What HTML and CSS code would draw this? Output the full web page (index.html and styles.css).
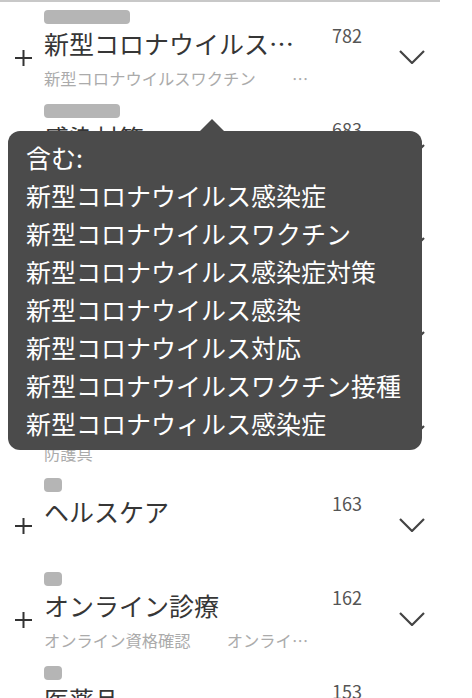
FILE: index.html
```html
<!DOCTYPE html>
<html lang="ja">
<head>
<meta charset="utf-8">
<link rel="stylesheet" href="styles.css">
</head>
<body>
<div class="list">
  <div class="row">
    <svg class="plus" viewBox="0 0 17 16"><path d="M8.5 0V16M0 8H17"/></svg>
    <div class="main">
      <div class="tag" style="width:86px"></div>
      <div class="title">新型コロナウイルス感染症</div>
      <div class="sub">新型コロナウイルスワクチン　　 新型コロナウイルス感染症対策</div>
    </div>
    <div class="count">782</div>
    <svg class="chev" viewBox="0 0 26 14"><path d="M1 1L13 13L25 1"/></svg>
  </div>
  <div class="row">
    <svg class="plus" viewBox="0 0 17 16"><path d="M8.5 0V16M0 8H17"/></svg>
    <div class="main">
      <div class="tag" style="width:76px"></div>
      <div class="title">感染対策</div>
      <div class="sub">消毒　　 換気</div>
    </div>
    <div class="count">683</div>
    <svg class="chev" viewBox="0 0 26 14"><path d="M1 1L13 13L25 1"/></svg>
  </div>
  <div class="row">
    <svg class="plus" viewBox="0 0 17 16"><path d="M8.5 0V16M0 8H17"/></svg>
    <div class="main">
      <div class="tag" style="width:60px"></div>
      <div class="title">マスク</div>
      <div class="sub">不織布マスク</div>
    </div>
    <div class="count">412</div>
    <svg class="chev" viewBox="0 0 26 14"><path d="M1 1L13 13L25 1"/></svg>
  </div>
  <div class="row">
    <svg class="plus" viewBox="0 0 17 16"><path d="M8.5 0V16M0 8H17"/></svg>
    <div class="main">
      <div class="tag" style="width:40px"></div>
      <div class="title">医療機関</div>
      <div class="sub">病院</div>
    </div>
    <div class="count">305</div>
    <svg class="chev" viewBox="0 0 26 14"><path d="M1 1L13 13L25 1"/></svg>
  </div>
  <div class="row">
    <svg class="plus" viewBox="0 0 17 16"><path d="M8.5 0V16M0 8H17"/></svg>
    <div class="main">
      <div class="tag" style="width:40px"></div>
      <div class="title">医療用品</div>
      <div class="sub">防護具</div>
    </div>
    <div class="count">201</div>
    <svg class="chev" viewBox="0 0 26 14"><path d="M1 1L13 13L25 1"/></svg>
  </div>
  <div class="row">
    <svg class="plus" viewBox="0 0 17 16"><path d="M8.5 0V16M0 8H17"/></svg>
    <div class="main">
      <div class="tag" style="width:18px"></div>
      <div class="title">ヘルスケア</div>
      <div class="sub"></div>
    </div>
    <div class="count">163</div>
    <svg class="chev" viewBox="0 0 26 14"><path d="M1 1L13 13L25 1"/></svg>
  </div>
  <div class="row">
    <svg class="plus" viewBox="0 0 17 16"><path d="M8.5 0V16M0 8H17"/></svg>
    <div class="main">
      <div class="tag" style="width:18px"></div>
      <div class="title">オンライン診療</div>
      <div class="sub">オンライン資格確認　　 オンライン服薬指導</div>
    </div>
    <div class="count">162</div>
    <svg class="chev" viewBox="0 0 26 14"><path d="M1 1L13 13L25 1"/></svg>
  </div>
  <div class="row">
    <svg class="plus" viewBox="0 0 17 16"><path d="M8.5 0V16M0 8H17"/></svg>
    <div class="main">
      <div class="tag" style="width:18px"></div>
      <div class="title">医薬品</div>
      <div class="sub">治療薬</div>
    </div>
    <div class="count">153</div>
    <svg class="chev" viewBox="0 0 26 14"><path d="M1 1L13 13L25 1"/></svg>
  </div>

  <div class="tooltip">
    <div class="tip-line">含む:</div>
    <div class="tip-line">新型コロナウイルス感染症</div>
    <div class="tip-line">新型コロナウイルスワクチン</div>
    <div class="tip-line">新型コロナウイルス感染症対策</div>
    <div class="tip-line">新型コロナウイルス感染</div>
    <div class="tip-line">新型コロナウイルス対応</div>
    <div class="tip-line">新型コロナウイルスワクチン接種</div>
    <div class="tip-line">新型コロナウィルス感染症</div>
  </div>
</div>
</body>
</html>
```

FILE: styles.css
```css
html, body {
  margin: 0;
  padding: 0;
  background: #ffffff;
  overflow: hidden;
}

body {
  font-family: "Noto Sans CJK JP", "Noto Sans", sans-serif;
  color: #333333;
}

.list {
  position: relative;
  width: 440px;
  border-top: 2px solid #c8c8c8;
}

.row {
  display: grid;
  grid-template-columns: 44px 288px 67px 25px;
  align-items: start;
  height: 93.7px;
  box-sizing: border-box;
  padding-top: 8px;
  overflow: hidden;
}

.plus {
  width: 17px;
  height: 16px;
  margin-top: 40px;
  margin-left: 15px;
  fill: none;
  stroke: #333333;
  stroke-width: 2;
}

.main {
  min-width: 0;
}

.tag {
  height: 14px;
  border-radius: 4px;
  background: #b5b5b5;
}

.title {
  width: 262px;
  margin-top: 3px;
  font-size: 25px;
  line-height: 32px;
  color: #363636;
  white-space: nowrap;
  overflow: hidden;
  text-overflow: ellipsis;
}

.sub {
  width: 272px;
  height: 22px;
  margin-top: 8px;
  font-size: 16.3px;
  line-height: 22px;
  color: #ababab;
  white-space: pre;
  overflow: hidden;
  text-overflow: ellipsis;
}

.count {
  margin-top: 15px;
  font-size: 18px;
  line-height: 20px;
  color: #555555;
}

.chev {
  width: 26px;
  height: 14px;
  margin-top: 40px;
  fill: none;
  stroke: #444444;
  stroke-width: 2.2;
}

.tooltip {
  position: absolute;
  left: 8px;
  top: 129px;
  width: 414px;
  height: 319px;
  box-sizing: border-box;
  padding: 7px 0 0 18px;
  border-radius: 12px;
  background: #4b4b4b;
  color: #ffffff;
  font-size: 25px;
  line-height: 38px;
}

.tooltip::before {
  content: "";
  position: absolute;
  top: -12px;
  left: 192px;
  border-left: 12px solid transparent;
  border-right: 12px solid transparent;
  border-bottom: 12px solid #4b4b4b;
}

.tip-line {
  white-space: nowrap;
}
```
